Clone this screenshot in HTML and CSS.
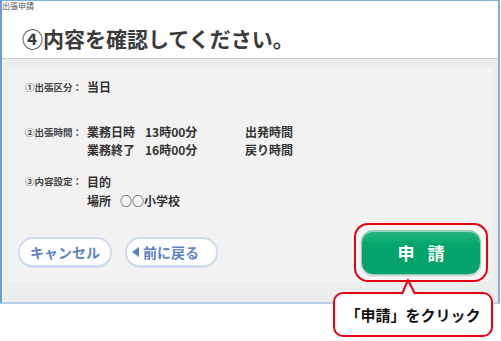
FILE: index.html
```html
<!DOCTYPE html>
<html>
<head>
  <title>出張申請</title>
  <link rel="stylesheet" href="styles.css">
</head>
<body>
  <div class="window">
    <div class="header">
      <div class="titlebar">出張申請</div>
      <h1>④内容を確認してください。</h1>
    </div>

    <div class="content">
      <div class="panel">
        <div class="row">
          <div class="label">①出張区分：</div>
          <div class="value">当日</div>
        </div>

        <div class="row row-time">
          <div class="label">②出張時間：</div>
          <div class="value">
            <div class="time-grid">
              <span>業務日時</span><span>13時00分</span><span>出発時間</span>
              <span>業務終了</span><span>16時00分</span><span>戻り時間</span>
            </div>
          </div>
        </div>

        <div class="row row-setting">
          <div class="label">③内容設定：</div>
          <div class="value">
            <div class="line">目的</div>
            <div class="line place"><span class="place-key">場所</span><span>○○小学校</span></div>
          </div>
        </div>

        <div class="actions">
          <button class="btn-sub">キャンセル</button>
          <button class="btn-sub btn-back"><span class="arrow"></span>前に戻る</button>
          <div class="highlight">
            <button class="btn-apply">申請</button>
          </div>
        </div>
      </div>
    </div>
  </div>

  <!-- annotation -->
  <div class="callout">
    <span class="callout-text">「申請」をクリック</span>
  </div>
  <svg class="callout-tail" width="18" height="16" viewBox="0 0 18 16">
    <polygon points="2,15 8,1 15,15" fill="#fff"/>
    <polyline points="2,15 8,1 15,15" fill="none" stroke="#e60012" stroke-width="2" stroke-linejoin="round"/>
  </svg>
</body>
</html>
```

FILE: styles.css
```css
body {
  width: 501px;
  height: 341px;
  margin: 0;
  padding: 0;
  font-family: "Noto Sans CJK JP", "Noto Sans", sans-serif;
  background-color: white;
  color: #333;
  position: relative;
}

.window {
  width: 500px;
  height: 304px;
  box-sizing: border-box;
  border: 2px solid #b7cfe7;
  border-top: 1px solid #7fb0de;
  border-left-color: #6b9fd4;
  border-right-color: #7fb0de;
  display: flex;
  flex-direction: column;
}

.header {
  height: 58px;
  background-color: white;
  border-bottom: 1px solid #cfcfcf;
}

.titlebar {
  font-size: 8px;
  line-height: 10px;
  color: #555;
}

h1 {
  margin: 13px 0 0 0;
  padding-left: 20px;
  font-size: 21px;
  line-height: 28px;
  font-weight: 700;
  color: #3a3a3a;
}

.content {
  flex: 1;
  background-color: #ededed;
  padding: 8px 6px 20px 6px;
}

.panel {
  height: 100%;
  box-sizing: border-box;
  background-color: #f2f2f2;
  padding: 11px 0 0 17px;
}

.row {
  display: flex;
  font-size: 12px;
  line-height: 18px;
  font-weight: 700;
}

.label {
  width: 62px;
  font-size: 9.5px;
  color: #444;
}

.value {
  color: #333;
}

.row-time {
  margin-top: 27px;
}

.time-grid {
  display: grid;
  grid-template-columns: 58px 100px auto;
}

.row-setting {
  margin-top: 13px;
}

.row-setting .line {
  line-height: 19px;
}

.place {
  display: flex;
}

.place-key {
  width: 33px;
}

/* Buttons */
.actions {
  display: flex;
  align-items: center;
  margin-top: 13px;
  margin-left: -7px;
}

.btn-sub {
  width: 94px;
  height: 31px;
  border: 2px solid #cfdcf0;
  border-bottom-width: 3px;
  border-radius: 15px;
  background-color: white;
  color: #5b84c6;
  font-family: inherit;
  font-size: 14px;
  font-weight: 700;
  display: flex;
  align-items: center;
  justify-content: center;
  padding: 0;
  margin-right: 13px;
}

.btn-back {
  width: 93px;
  justify-content: flex-start;
  padding-left: 5px;
}

.arrow {
  width: 0;
  height: 0;
  border-top: 5px solid transparent;
  border-bottom: 5px solid transparent;
  border-right: 7px solid #5b84c6;
  margin-right: 4px;
}

.highlight {
  margin-left: auto;
  margin-right: 4px;
  border: 2px solid #e60012;
  border-radius: 14px;
  background-color: #f7f7f7;
  padding: 5px;
}

.btn-apply {
  display: block;
  width: 120px;
  height: 45px;
  border: 1px solid #8fd0b5;
  border-radius: 12px;
  background: linear-gradient(#2bb883, #06a56d 30%, #05a16a);
  box-shadow: inset 0 1px 0 rgba(255, 255, 255, 0.5), 0 1px 2px rgba(0, 0, 0, 0.2);
  color: white;
  font-family: inherit;
  font-size: 17px;
  font-weight: 700;
  letter-spacing: 13px;
  padding: 0 0 0 13px;
}

/* Callout annotation */
.callout {
  position: absolute;
  left: 333px;
  top: 292px;
  width: 160px;
  height: 45px;
  box-sizing: border-box;
  border: 2px solid #e60012;
  border-radius: 10px;
  background-color: white;
  display: flex;
  align-items: center;
  justify-content: center;
}

.callout-text {
  color: #111;
  font-size: 15px;
  font-weight: 700;
  line-height: 20px;
  white-space: nowrap;
}

.callout-tail {
  position: absolute;
  left: 400px;
  top: 279px;
}
```
